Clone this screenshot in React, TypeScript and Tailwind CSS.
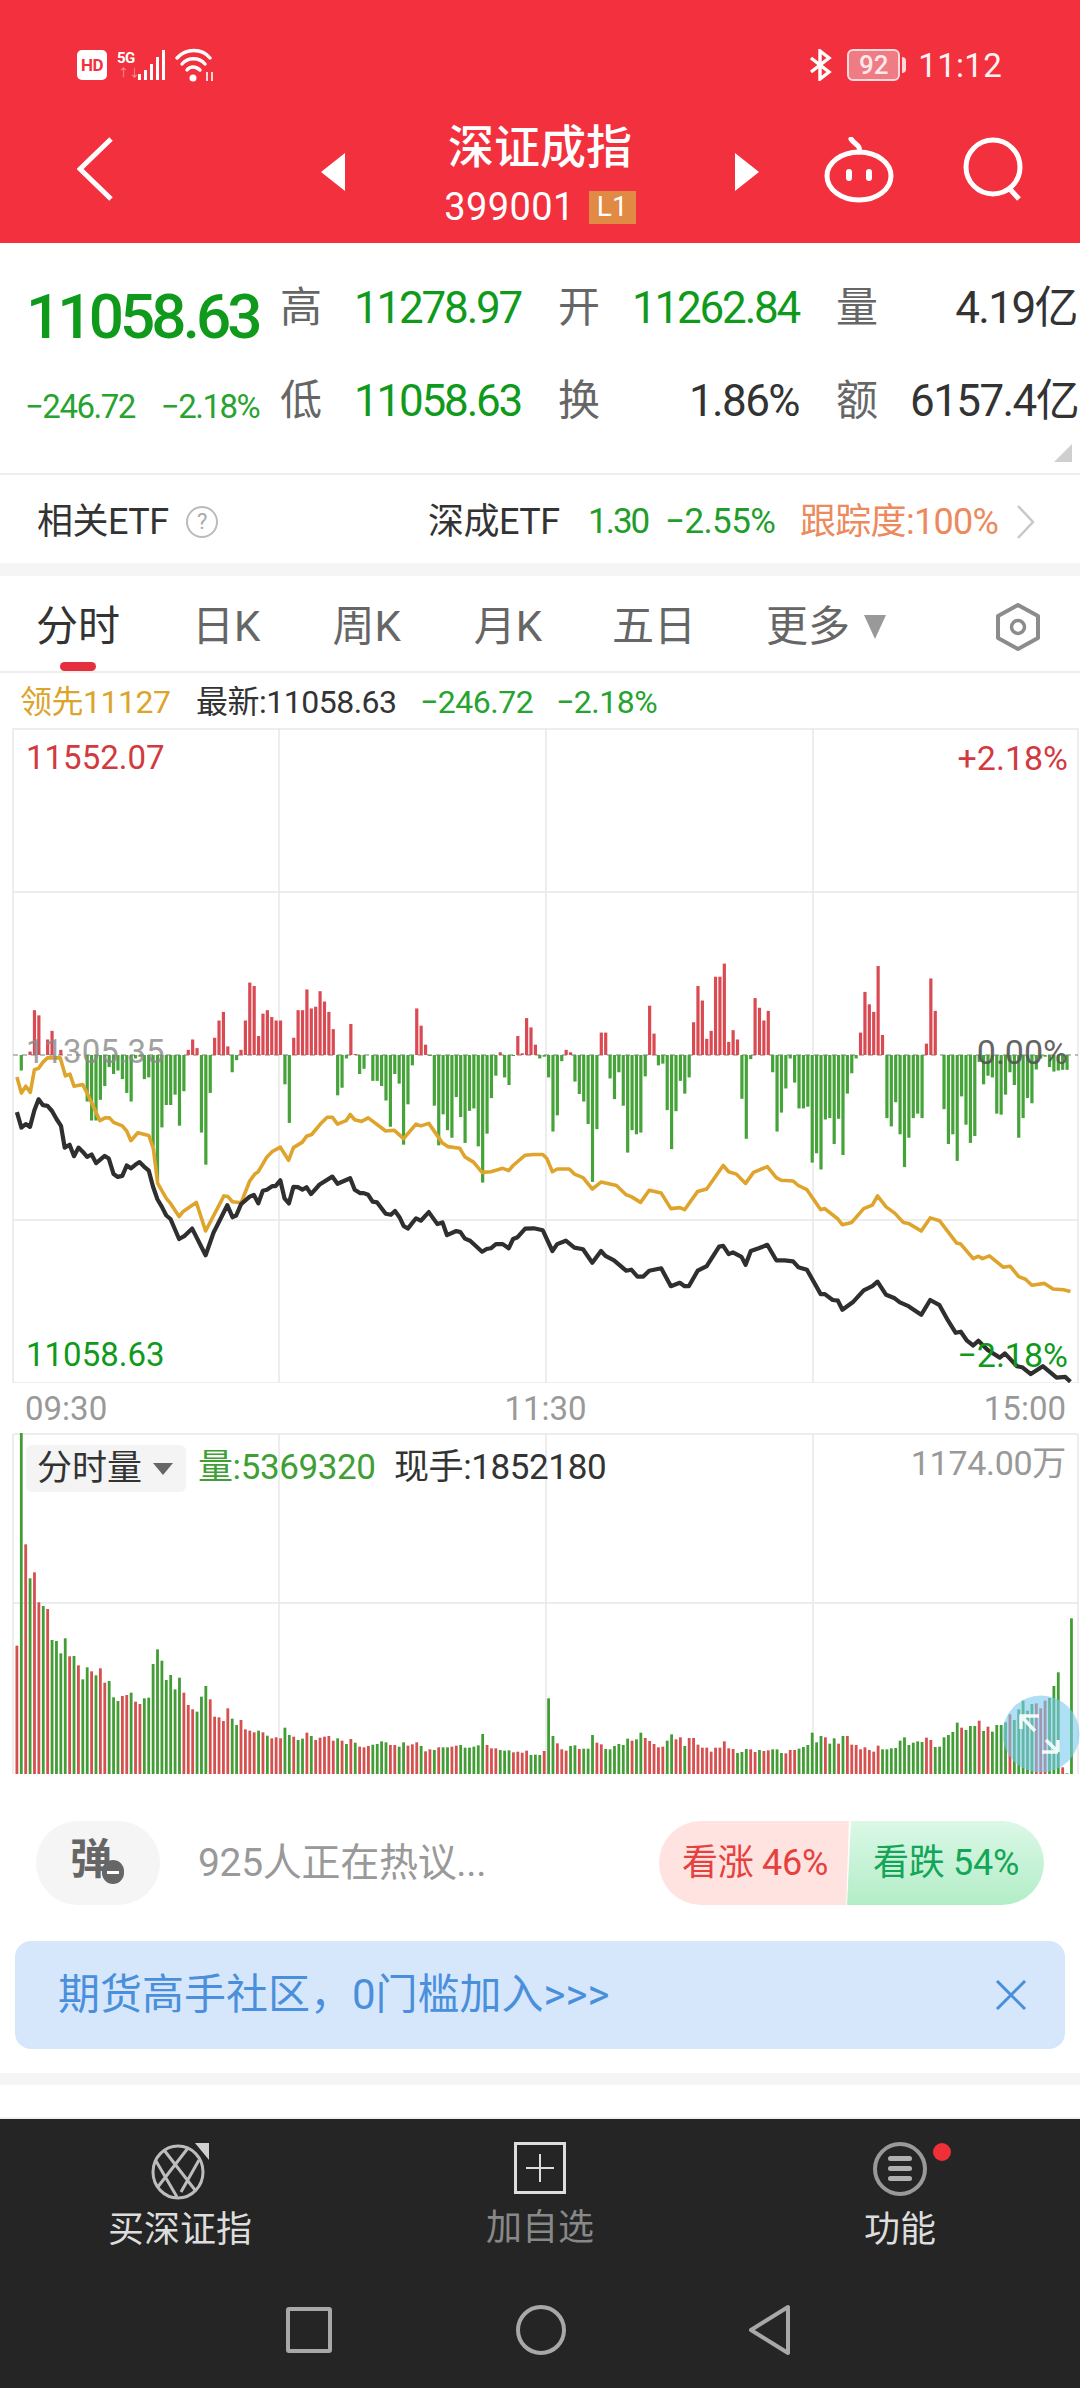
import React from "react";

const SX = 1568 / 540;

const bars1 = [0,-45,0,10,130,115,0,45,70,0,15,0,0,0,0,-2,-135,-190,-190,-130,-90,-35,-55,-45,-70,-110,-135,-10,-5,-70,-65,-265,-365,-210,-145,-145,-115,-205,-105,15,45,20,-225,-318,-110,50,100,125,25,-50,-15,15,100,210,200,55,120,130,110,100,100,-85,-197,50,130,130,190,135,140,185,155,125,75,-117,-95,-10,90,3,-55,-40,-2,-75,-75,-90,-132,-208,-55,-83,-260,-143,-30,135,85,30,-3,-147,-262,-172,-218,-240,-122,-180,-255,-162,-155,-265,-370,-228,-125,-60,8,-65,-87,-3,55,5,107,80,30,-10];
const bars2 = [-5,-65,-222,-175,-18,15,8,-77,-113,-135,-200,-368,-215,65,65,-68,-128,-50,-147,-283,-218,-230,-225,-62,143,62,-30,-25,-160,-273,-163,-75,-112,-65,95,200,158,47,70,227,227,265,38,72,45,-127,-243,-12,165,137,100,128,-50,-222,-167,-97,-10,-80,-155,-155,-150,-312,-285,-332,-187,-183,-258,-185,-290,-112,-53,-10,65,183,147,125,258,58,-183,-207,-137,-230,-325,-240,-183,-170,-183,33,222,128,-2,-157,-258,-230,-307,-120,-202,-255,-235,-20,-85,-60,-65,-170,-173,-115,-50,-87,-240,-183,-125,-140,-42,-10,-5,-35,-48,-45,-43,-43];
const bars = [...bars1, ...bars2];

const vol = [-647,5,-343,445,-427,-517,528,-537,630,633,670,625,-679,678,-706,748,712,-724,736,-715,-758,753,802,813,-798,-795,788,-815,-822,805,803,702,658,692,750,735,778,743,-788,-825,-838,845,800,768,-808,-860,-862,-873,-835,866,885,-870,-898,-902,-907,902,-907,917,-925,-922,-925,893,915,-920,930,926,-908,918,-930,-923,-920,-918,-932,925,-932,942,-927,938,-950,-952,-948,944,942,934,937,-945,-945,950,937,-947,-943,-937,948,-964,-958,960,-952,952,952,-950,-947,945,953,953,950,946,912,-945,-955,-955,960,962,961,-967,-965,-968,-962,975,974,975,
-963,805,918,-940,-958,-962,948,946,-957,956,956,915,-938,-943,957,958,948,942,945,926,-932,928,908,-924,-933,-942,-952,-950,932,913,-928,-922,948,-924,-924,-944,-953,-953,-965,-953,-953,-934,-955,-957,969,966,957,-958,-966,960,-963,-961,958,958,969,-970,-960,-960,956,951,945,908,937,918,-922,941,925,-941,918,-918,-944,-945,-958,-952,-960,-965,-947,958,958,955,954,932,922,945,938,934,936,-923,-930,951,950,922,915,906,878,-893,900,888,888,-872,903,-890,905,885,885,877,-853,870,838,812,842,822,-820,-835,-812,804,768,727,-1012,1030,565];

const black1 = [49,615,62,660,75,650,87,658,100,610,112,578,125,595,138,597,151,612,164,635,177,655,188,718,202,710,215,743,228,718,240,730,253,745,266,738,279,763,304,742,316,750,330,795,342,803,355,800,368,770,380,778,393,768,405,760,418,773,432,785,444,830,457,868,470,890,483,915,495,925,520,983,535,975,558,953,597,1030,620,965,660,885,675,920,686,915,700,882,725,860,737,855,750,880,763,843,775,840,790,830,800,830,814,813,826,865,839,880,852,832,865,833,878,840,890,833,903,853,928,825,965,802,980,823,1017,807,1030,840,1045,850,1056,850,1069,855,1082,875,1095,877,1120,910,1135,913,1147,902,1160,920,1172,945,1184,953,1208,923,1222,930,1245,905,1270,940,1285,935,1298,972,1325,960,1337,963,1350,982,1365,988,1400,1020,1413,1012,1425,1010,1440,998,1460,998,1477,1010,1490,983,1503,978,1525,953,1550,952];
const black2 = [8,958,36,1018,50,998,75,988,100,1008,125,1013,152,1052,177,1018,190,1032,215,1045,250,1075,265,1072,283,1092,300,1092,317,1075,352,1068,380,1120,406,1110,420,1120,432,1120,458,1075,484,1062,520,1005,532,1003,548,1027,560,1022,585,1035,597,1058,612,1018,635,1010,660,1000,686,1045,710,1045,735,1048,750,1065,775,1072,815,1143,827,1143,850,1160,865,1162,878,1188,910,1165,940,1132,965,1120,980,1107,1005,1145,1030,1155,1045,1167,1070,1178,1107,1203,1133,1160,1160,1175,1185,1220,1207,1255,1222,1252,1240,1278,1258,1292,1273,1278,1300,1305,1335,1327,1350,1315,1385,1352,1400,1355,1425,1375,1460,1352,1500,1385,1525,1383,1540,1397];
const gold1 = [49,513,62,560,75,540,88,558,100,492,112,488,125,470,138,458,175,458,190,510,203,505,215,540,240,535,253,560,290,640,305,632,318,632,330,645,355,655,368,670,380,698,400,675,432,683,445,720,458,822,483,865,495,880,520,918,532,903,558,885,570,877,597,960,650,858,662,860,675,875,700,878,725,815,740,795,750,788,775,745,790,730,814,717,838,755,852,718,878,702,890,685,905,680,930,650,950,630,965,630,980,650,1005,640,1017,622,1030,637,1050,642,1069,632,1120,670,1145,668,1172,692,1208,650,1222,655,1245,648,1285,705,1300,715,1335,720,1350,745,1375,760,1400,790,1425,788,1460,778,1477,785,1490,770,1525,740,1550,738];
const gold2 = [8,738,20,750,36,788,50,780,85,780,100,795,125,805,152,838,177,818,222,828,250,855,265,860,292,877,317,842,352,850,380,895,406,892,420,898,458,845,484,838,532,770,548,788,570,795,597,822,620,790,660,773,686,805,700,813,735,815,750,828,775,840,815,898,827,895,865,925,878,942,905,935,940,895,965,885,980,858,1005,890,1030,908,1055,935,1070,938,1107,960,1133,922,1160,930,1210,995,1222,998,1258,1040,1273,1033,1285,1040,1305,1032,1345,1065,1365,1062,1390,1092,1410,1100,1428,1117,1465,1112,1490,1128,1520,1130,1540,1135];

function toPts(a: number[], xOff: number) {
  let out = "";
  for (let i = 0; i < a.length; i += 2) {
    out += `${(xOff + a[i] / SX).toFixed(1)},${(900 + a[i + 1] / 2.9 - 728).toFixed(1)} `;
  }
  return out;
}
const barX = (i: number) => 16.9 + i * 4.394;

function MainChart() {
  const zero = 327;
  return (
    <div className="relative h-[655px]">
      <svg width="1080" height="655" viewBox="0 0 1080 655" className="block">
        <g stroke="#e8e8e8" strokeWidth="1.5" fill="none">
          <rect x="13" y="1" width="1065" height="654" />
          <path d="M279 0V655M546 0V655M813 0V655M13 164H1078M13 492H1078" />
        </g>
        <path d="M13 327H1078" stroke="#a8a8a8" strokeWidth="1.5" strokeDasharray="5 4" />
        {bars.map((b, i) => {
          const h = Math.abs(b) / 2.9;
          if (h < 0.8) return null;
          return (
            <rect
              key={i}
              x={barX(i) - 1.6}
              width="3.2"
              y={b > 0 ? zero - h : zero}
              height={h}
              fill={b > 0 ? "#da4a52" : "#46a339"}
            />
          );
        })}
        <polyline points={toPts(gold1, 0) + toPts(gold2, 540)} fill="none" stroke="#dfa42c" strokeWidth="3.6" strokeLinejoin="round" />
        <polyline points={toPts(black1, 0) + toPts(black2, 540)} fill="none" stroke="#2f2f2f" strokeWidth="4.2" strokeLinejoin="round" />
      </svg>
      <span className="absolute left-[26px] top-[11px] text-[33px] leading-[38px] text-[#d23a40]">11552.07</span>
      <span className="absolute right-[12px] top-[11px] text-[34px] leading-[38px] text-[#d23a40]">+2.18%</span>
      <span className="absolute left-[26px] top-[305px] text-[33px] leading-[38px] text-[#8a8a8a] opacity-80">11305.35</span>
      <span className="absolute right-[12px] top-[305px] text-[34px] leading-[38px] text-[#555] opacity-90">0.00%</span>
      <span className="absolute left-[26px] top-[608px] text-[33px] leading-[38px] text-[#0f9a1c]">11058.63</span>
      <span className="absolute right-[12px] top-[608px] text-[34px] leading-[38px] text-[#0f9a1c]">−2.18%</span>
    </div>
  );
}

function VolumeChart() {
  return (
    <div className="relative h-[341px]">
      <svg width="1080" height="341" viewBox="0 0 1080 341" className="block">
        <g stroke="#e8e8e8" strokeWidth="1.5" fill="none">
          <path d="M13 1H1078M13 1V341M1078 1V341M279 1V341M546 1V341M813 1V341M13 170H1078" />
        </g>
        {vol.map((v, i) => {
          const top = Math.abs(v) / 3 - 3;
          return (
            <rect
              key={i}
              x={barX(i) - 1.4}
              width="2.8"
              y={top}
              height={341 - top}
              fill={v < 0 ? "#d5504f" : "#439d35"}
            />
          );
        })}
        <circle cx="1041" cy="301" r="38.5" fill="#79c9ef" opacity="0.6" />
        <g stroke="#ffffff" strokeWidth="3.5" fill="none" opacity="0.9">
          <path d="M1039 283H1021V296M1021 283L1035 298M1058 319H1042M1058 319V307M1058 319L1046 307" />
        </g>
      </svg>
      <div className="absolute left-[26px] top-[12px] flex h-[47px] w-[160px] items-center rounded-md bg-[#f4f4f4] pl-[11px]">
        <span className="text-[35px] leading-none text-[#333]">分时量</span>
        <svg width="20" height="14" viewBox="0 0 20 14" className="ml-[11px]">
          <path d="M0 1H20L10 13Z" fill="#666" />
        </svg>
      </div>
      <span className="absolute left-[198px] top-[14px] text-[35px] leading-[42px] tracking-[-0.4px] text-[#3f9f34]">量:5369320</span>
      <span className="absolute left-[394px] top-[14px] text-[35px] leading-[42px] tracking-[-0.4px] text-[#333]">现手:1852180</span>
      <span className="absolute right-[14px] top-[10px] text-[34px] leading-[40px] tracking-[-0.3px] text-[#999]">1174.00万</span>
    </div>
  );
}

function StatusBar() {
  return (
    <div className="ml-[77px] mr-[78px] mt-[48px] flex h-[34px] items-center text-white">
      <span className="flex h-[30px] w-[30px] items-center justify-center rounded-[5px] bg-white text-[17px] font-bold leading-none tracking-[-0.5px] text-[#f3303e]">HD</span>
      <div className="relative ml-[10px] h-[30px] w-[20px]">
        <span className="absolute left-0 top-0 text-[15px] font-bold leading-[16px] tracking-[-0.5px]">5G</span>
        <span className="absolute bottom-0 left-[1px] text-[11px] leading-[12px] text-[#ff9a9f]">↑↓</span>
      </div>
      <svg width="28" height="32" viewBox="0 0 28 32" className="ml-[1px]">
        <g fill="#fff">
          <rect x="0" y="25" width="3" height="6" />
          <rect x="6" y="21" width="3" height="10" />
          <rect x="12" y="15" width="3" height="16" />
          <rect x="18" y="8" width="3" height="23" />
          <rect x="24" y="1" width="3" height="30" />
        </g>
      </svg>
      <svg width="38" height="34" viewBox="0 0 38 34" className="ml-[9px]">
        <g fill="none" stroke="#fff" strokeWidth="3.4" strokeLinecap="round">
          <path d="M2 10C11 0 27 0 35 10" />
          <path d="M7 16C13 9 24 9 30 16" />
          <path d="M12 22C15 18 21 18 25 22" />
        </g>
        <circle cx="18" cy="30" r="3.5" fill="#fff" />
        <path d="M32 24V33M37 24V33" stroke="#fff" strokeWidth="1.6" />
      </svg>
      <svg width="26" height="32" viewBox="0 0 26 32" className="ml-auto">
        <path d="M3 9L21 23L12 30V2L21 9L3 23" fill="none" stroke="#fff" strokeWidth="3.4" />
      </svg>
      <div className="ml-[13px] flex h-[32px] w-[53px] items-center justify-center rounded-[6px] border-[2px] border-[#ffd9db] bg-[#ef7b84] text-[26px] font-medium leading-none text-[#ffe9ea]">92</div>
      <div className="ml-[2px] h-[16px] w-[4px] rounded-r-sm bg-[#ffd9db]" />
      <span className="ml-[12px] text-[33px] leading-none tracking-[0.3px] text-[#fff2f2]">11:12</span>
    </div>
  );
}

function TopNav() {
  return (
    <div className="mt-[38px] flex h-[123px] items-start">
      <svg width="36" height="64" viewBox="0 0 36 64" className="ml-[77px] mt-[17px]">
        <path d="M34 2L3 32L34 62" fill="none" stroke="#fff" strokeWidth="5" />
      </svg>
      <svg width="24" height="38" viewBox="0 0 24 38" className="ml-[208px] mt-[33px]">
        <path d="M24 0V38L0 19Z" fill="#fff" />
      </svg>
      <div className="flex w-[390px] flex-col items-center text-white">
        <span className="mt-[2px] text-[46px] font-medium leading-[50px]">深证成指</span>
        <div className="mt-[16px] flex items-center">
          <span className="text-[38px] leading-[38px] tracking-[0.4px]">399001</span>
          <span className="ml-[14px] flex h-[33px] w-[47px] items-center justify-center bg-[#e08a44] text-[28px] leading-none">L1</span>
        </div>
      </div>
      <svg width="24" height="38" viewBox="0 0 24 38" className="mt-[33px]">
        <path d="M0 0V38L24 19Z" fill="#fff" />
      </svg>
      <svg width="72" height="66" viewBox="0 0 72 66" className="ml-[64px] mt-[17px]">
        <g fill="none" stroke="#fff" strokeWidth="5">
          <ellipse cx="36" cy="39" rx="32" ry="24" />
          <path d="M36 15C38 8 32 8 28 2" strokeLinecap="round" />
        </g>
        <rect x="23" y="32" width="6" height="12" rx="3" fill="#fff" />
        <rect x="43" y="32" width="6" height="12" rx="3" fill="#fff" />
      </svg>
      <svg width="62" height="64" viewBox="0 0 62 64" className="ml-[68px] mt-[17px]">
        <circle cx="30" cy="30" r="27" fill="none" stroke="#fff" strokeWidth="5" />
        <path d="M45 50L56 62" stroke="#fff" strokeWidth="5" />
      </svg>
    </div>
  );
}

function Stat({ label, value, green, wide }: { label: string; value: string; green?: boolean; wide?: boolean }) {
  return (
    <div className={`flex items-center ${wide ? "w-[242px]" : "w-[278px]"}`}>
      <span className="w-[42px] text-[42px] leading-none text-[#666]">{label}</span>
      <span
        className={`ml-[32px] w-[167px] whitespace-nowrap text-right text-[44px] leading-none ${green ? "tracking-[-2.2px] text-[#0f9a1c]" : "tracking-[-1.6px] text-[#333]"}`}
      >
        {value}
      </span>
    </div>
  );
}

function StatsBlock() {
  return (
    <div className="relative h-[232px] border-b-2 border-[#eeeeee] pt-[25px]">
      <div className="flex h-[80px] items-center">
        <div className="w-[280px] pl-[26px]">
          <span className="mt-[18px] block whitespace-nowrap text-[62px] font-medium leading-none tracking-[-3.9px] text-[#0f9a1c]">11058.63</span>
        </div>
        <Stat label="高" value="11278.97" green />
        <Stat label="开" value="11262.84" green />
        <Stat label="量" value="4.19亿" wide />
      </div>
      <div className="mt-[13px] flex h-[80px] items-center">
        <div className="flex w-[280px] items-center pl-[25px] pt-[10px] text-[33px] leading-none tracking-[-1.5px] text-[#27a32f]">
          <span>−246.72</span>
          <span className="ml-[26px]">−2.18%</span>
        </div>
        <Stat label="低" value="11058.63" green />
        <Stat label="换" value="1.86%" />
        <Stat label="额" value="6157.4亿" wide />
      </div>
      <svg width="18" height="18" viewBox="0 0 18 18" className="absolute bottom-[11px] right-[8px]">
        <path d="M18 0V18H0Z" fill="#cfcfcf" />
      </svg>
    </div>
  );
}

function EtfRow() {
  return (
    <div className="flex h-[88px] items-center pt-[5px] text-[36px] leading-none tracking-[-0.5px]">
      <span className="ml-[37px] w-[132px] text-[#333]">相关ETF</span>
      <span className="ml-[17px] flex h-[32px] w-[32px] items-center justify-center rounded-full border-2 border-[#bbb] text-[22px] text-[#aaa]">?</span>
      <span className="ml-[210px] w-[133px] text-[#333]">深成ETF</span>
      <span className="ml-[27px] w-[60px] text-[35px] tracking-[-2px] text-[#1f9e2a]">1.30</span>
      <span className="ml-[17px] w-[110px] text-[35px] tracking-[-0.6px] text-[#1f9e2a]">−2.55%</span>
      <span className="ml-[25px] w-[199px] whitespace-nowrap tracking-[-0.7px] text-[#ec8a5d]">跟踪度:100%</span>
      <svg width="20" height="36" viewBox="0 0 20 36" className="ml-[17px]">
        <path d="M2 2L17 18L2 34" fill="none" stroke="#c8c8c8" strokeWidth="2.5" />
      </svg>
    </div>
  );
}

function Tabs() {
  return (
    <div className="relative flex h-[97px] items-center border-b-2 border-[#eeeeee] pt-[7px] text-[42px] leading-none text-[#666]">
      <span className="ml-[36px] text-[#333]">分时</span>
      <span className="ml-[72px]">日K</span>
      <span className="ml-[72px]">周K</span>
      <span className="ml-[73px]">月K</span>
      <span className="ml-[70px]">五日</span>
      <span className="ml-[70px]">更多</span>
      <svg width="22" height="24" viewBox="0 0 22 24" className="ml-[14px]">
        <path d="M0 0H22L11 24Z" fill="#999" />
      </svg>
      <svg width="48" height="48" viewBox="0 0 48 48" className="ml-[108px]">
        <path d="M24 2L44 13V35L24 46L4 35V13Z" fill="none" stroke="#8c8c8c" strokeWidth="4" strokeLinejoin="round" />
        <circle cx="24" cy="24" r="6.5" fill="none" stroke="#8c8c8c" strokeWidth="3.5" />
      </svg>
      <div className="absolute bottom-0 left-[60px] h-[9px] w-[36px] rounded-full bg-[#e3303c]" />
    </div>
  );
}

function InfoLine() {
  return (
    <div className="flex h-[55px] items-center pt-[3px] text-[32px] leading-none tracking-[-0.5px]">
      <span className="ml-[20px] w-[150px] whitespace-nowrap text-[#dba42a]">领先11127</span>
      <span className="ml-[26px] w-[198px] whitespace-nowrap text-[#333]">最新:11058.63</span>
      <span className="ml-[26px] w-[110px] whitespace-nowrap text-[#27a32f]">−246.72</span>
      <span className="ml-[26px] whitespace-nowrap text-[#27a32f]">−2.18%</span>
    </div>
  );
}

function TimeAxis() {
  return (
    <div className="flex h-[50px] items-center justify-between pl-[25px] pr-[14px] text-[33px] leading-none text-[#999]">
      <span>09:30</span>
      <span>11:30</span>
      <span>15:00</span>
    </div>
  );
}

function Social() {
  return (
    <div className="flex h-[167px] items-start pt-[47px]">
      <div className="relative ml-[36px] flex h-[84px] w-[124px] items-center rounded-[42px] bg-[#f5f5f5] pl-[34px]">
        <span className="pb-[6px] text-[42px] font-bold leading-none text-[#666]">弹</span>
        <span className="absolute left-[66px] top-[39px] flex h-[24px] w-[22px] items-center justify-center rounded-full bg-[#666]">
          <span className="h-[3px] w-[12px] bg-white" />
        </span>
      </div>
      <span className="ml-[38px] flex h-[84px] items-center text-[39px] leading-none tracking-[-0.3px] text-[#999]">925人正在热议...</span>
      <div className="ml-auto mr-[36px] flex h-[84px] w-[385px]">
        <div className="flex h-[84px] w-[190px] items-center rounded-l-[42px] bg-[#ffe3e1] pl-[23px] text-[36px] leading-none tracking-[-0.3px] text-[#e5423f] [clip-path:polygon(0_0,100%_0,98.5%_100%,0_100%)]">看涨 46%</div>
        <div className="-ml-[2px] flex h-[84px] flex-1 items-center rounded-r-[42px] bg-gradient-to-b from-[#dbf8e7] to-[#b2edc7] pl-[26px] text-[36px] leading-none tracking-[-0.3px] text-[#14a558] [clip-path:polygon(2%_0,100%_0,100%_100%,0_100%)]">看跌 54%</div>
      </div>
    </div>
  );
}

function Banner() {
  return (
    <div className="mx-[15px] flex h-[108px] items-center justify-between rounded-[16px] bg-[#d6e7fb] pl-[43px] pr-[38px]">
      <span className="text-[42px] leading-none text-[#4a8fdb]">期货高手社区，0门槛加入&gt;&gt;&gt;</span>
      <svg width="32" height="30" viewBox="0 0 32 30">
        <path d="M2 1L30 29M30 1L2 29" stroke="#4a8fdb" strokeWidth="3" fill="none" />
      </svg>
    </div>
  );
}

function BottomBar() {
  return (
    <div className="flex h-[269px] flex-col bg-[#252525]">
      <div className="mt-[21px] flex">
        <div className="flex w-[360px] flex-col items-center">
          <svg width="62" height="60" viewBox="0 0 62 60">
            <g fill="none" stroke="#bdbdbd" strokeWidth="3">
              <ellipse cx="29" cy="32" rx="25" ry="26" />
              <path d="M7 21L28 57M15 10L46 50M39 8L8 48M50 20L32 52" />
            </g>
            <path d="M46 3H60V20Z" fill="#d0d0d0" />
          </svg>
          <span className="mt-[12px] text-[36px] leading-none text-[#dddddd]">买深证指</span>
        </div>
        <div className="flex w-[360px] flex-col items-center">
          <div className="mt-[2px] flex h-[52px] w-[52px] items-center justify-center border-[3px] border-[#dddddd]">
            <svg width="28" height="28" viewBox="0 0 28 28">
              <path d="M14 0V28M0 14H28" stroke="#dddddd" strokeWidth="2" />
            </svg>
          </div>
          <span className="mt-[16px] text-[36px] leading-none text-[#888]">加自选</span>
        </div>
        <div className="relative flex w-[360px] flex-col items-center">
          <svg width="56" height="58" viewBox="0 0 56 58">
            <circle cx="28" cy="29" r="25" fill="none" stroke="#999" strokeWidth="4" />
            <g fill="#b0b0b0">
              <rect x="16" y="16" width="24" height="5" rx="2.5" />
              <rect x="16" y="26" width="24" height="5" rx="2.5" />
              <rect x="16" y="36" width="24" height="5" rx="2.5" />
            </g>
          </svg>
          <span className="mt-[14px] text-[36px] leading-none text-[#dddddd]">功能</span>
          <span className="absolute left-[213px] top-[3px] h-[18px] w-[18px] rounded-full bg-[#ef3038]" />
        </div>
      </div>
      <div className="mt-[56px] flex items-center">
        <div className="ml-[286px] h-[46px] w-[46px] rounded-[3px] border-[4px] border-[#a8a8a8]" />
        <div className="ml-[184px] h-[50px] w-[50px] rounded-full border-[4px] border-[#a8a8a8]" />
        <svg width="44" height="52" viewBox="0 0 44 52" className="ml-[182px]">
          <path d="M40 3V49L3 26Z" fill="none" stroke="#a8a8a8" strokeWidth="4" strokeLinejoin="round" />
        </svg>
      </div>
    </div>
  );
}

export default function App() {
  return (
    <div className="h-[2388px] w-[1080px] overflow-hidden bg-white font-[Roboto,'Noto_Sans_CJK_SC',sans-serif]">
      <header className="flex h-[243px] flex-col bg-[#f3303e]">
        <StatusBar />
        <TopNav />
      </header>
      <StatsBlock />
      <EtfRow />
      <div className="h-[13px] bg-[#f5f5f5]" />
      <Tabs />
      <InfoLine />
      <MainChart />
      <TimeAxis />
      <VolumeChart />
      <Social />
      <Banner />
      <div className="h-[24px]" />
      <div className="h-[12px] bg-[#f5f5f5]" />
      <div className="h-[34px] border-b-2 border-[#f2f2f2]" />
      <BottomBar />
    </div>
  );
}
